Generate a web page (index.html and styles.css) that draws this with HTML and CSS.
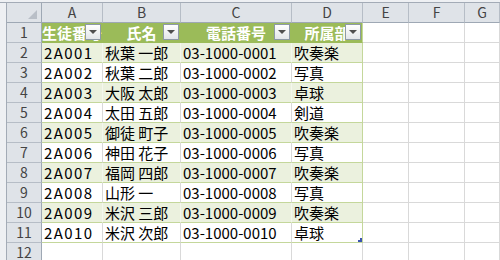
FILE: index.html
```html
<!DOCTYPE html>
<html lang="ja">
<head>
    <meta charset="UTF-8">
    <title>部員名簿</title>
    <link rel="stylesheet" href="styles.css">
</head>
<body>
    <div class="topbar"></div>
    <div class="main">
        <div class="frame"></div>
        <div class="sheet">
            <div class="row colheads">
                <div class="cell corner"></div>
                <div class="cell ch">A</div>
                <div class="cell ch">B</div>
                <div class="cell ch">C</div>
                <div class="cell ch">D</div>
                <div class="cell ch">E</div>
                <div class="cell ch">F</div>
                <div class="cell ch">G</div>
            </div>

            <div class="row">
                <div class="cell rh">1</div>
                <div class="cell th">生徒番号<span class="filter"></span></div>
                <div class="cell th">氏名<span class="filter"></span></div>
                <div class="cell th">電話番号<span class="filter"></span></div>
                <div class="cell th last">所属部<span class="filter"></span></div>
                <div class="cell"></div>
                <div class="cell"></div>
                <div class="cell"></div>
            </div>

            <div class="row band">
                <div class="cell rh">2</div>
                <div class="cell td id">2A001</div>
                <div class="cell td">秋葉 一郎</div>
                <div class="cell td">03-1000-0001</div>
                <div class="cell td last">吹奏楽</div>
                <div class="cell"></div>
                <div class="cell"></div>
                <div class="cell"></div>
            </div>
            <div class="row">
                <div class="cell rh">3</div>
                <div class="cell td id">2A002</div>
                <div class="cell td">秋葉 二郎</div>
                <div class="cell td">03-1000-0002</div>
                <div class="cell td last">写真</div>
                <div class="cell"></div>
                <div class="cell"></div>
                <div class="cell"></div>
            </div>
            <div class="row band">
                <div class="cell rh">4</div>
                <div class="cell td id">2A003</div>
                <div class="cell td">大阪 太郎</div>
                <div class="cell td">03-1000-0003</div>
                <div class="cell td last">卓球</div>
                <div class="cell"></div>
                <div class="cell"></div>
                <div class="cell"></div>
            </div>
            <div class="row">
                <div class="cell rh">5</div>
                <div class="cell td id">2A004</div>
                <div class="cell td">太田 五郎</div>
                <div class="cell td">03-1000-0004</div>
                <div class="cell td last">剣道</div>
                <div class="cell"></div>
                <div class="cell"></div>
                <div class="cell"></div>
            </div>
            <div class="row band">
                <div class="cell rh">6</div>
                <div class="cell td id">2A005</div>
                <div class="cell td">御徒 町子</div>
                <div class="cell td">03-1000-0005</div>
                <div class="cell td last">吹奏楽</div>
                <div class="cell"></div>
                <div class="cell"></div>
                <div class="cell"></div>
            </div>
            <div class="row">
                <div class="cell rh">7</div>
                <div class="cell td id">2A006</div>
                <div class="cell td">神田 花子</div>
                <div class="cell td">03-1000-0006</div>
                <div class="cell td last">写真</div>
                <div class="cell"></div>
                <div class="cell"></div>
                <div class="cell"></div>
            </div>
            <div class="row band">
                <div class="cell rh">8</div>
                <div class="cell td id">2A007</div>
                <div class="cell td">福岡 四郎</div>
                <div class="cell td">03-1000-0007</div>
                <div class="cell td last">吹奏楽</div>
                <div class="cell"></div>
                <div class="cell"></div>
                <div class="cell"></div>
            </div>
            <div class="row">
                <div class="cell rh">9</div>
                <div class="cell td id">2A008</div>
                <div class="cell td">山形 一</div>
                <div class="cell td">03-1000-0008</div>
                <div class="cell td last">写真</div>
                <div class="cell"></div>
                <div class="cell"></div>
                <div class="cell"></div>
            </div>
            <div class="row band">
                <div class="cell rh">10</div>
                <div class="cell td id">2A009</div>
                <div class="cell td">米沢 三郎</div>
                <div class="cell td">03-1000-0009</div>
                <div class="cell td last">吹奏楽</div>
                <div class="cell"></div>
                <div class="cell"></div>
                <div class="cell"></div>
            </div>
            <div class="row">
                <div class="cell rh">11</div>
                <div class="cell td id">2A010</div>
                <div class="cell td">米沢 次郎</div>
                <div class="cell td">03-1000-0010</div>
                <div class="cell td last end">卓球</div>
                <div class="cell"></div>
                <div class="cell"></div>
                <div class="cell"></div>
            </div>
            <div class="row">
                <div class="cell rh">12</div>
                <div class="cell"></div>
                <div class="cell"></div>
                <div class="cell"></div>
                <div class="cell"></div>
                <div class="cell"></div>
                <div class="cell"></div>
                <div class="cell"></div>
            </div>
        </div>
    </div>
</body>
</html>
```

FILE: styles.css
```css
body {
    margin: 0;
    background-color: #ffffff;
    font-family: "Noto Sans CJK JP", "Liberation Sans", sans-serif;
    overflow: hidden;
}
.topbar {
    height: 2px;
    background-color: #eef0f3;
    border-bottom: 1px solid #a3abb6;
}
.main {
    display: flex;
}
.frame {
    width: 6px;
    flex: none;
    background-color: #eef0f3;
    border-right: 1px solid #a3abb6;
}
.sheet {
    flex: 1;
}
.row {
    display: grid;
    grid-template-columns: 35px 61px 78px 111px 71px 46px 56px 1fr;
    height: 20px;
}
.cell {
    box-sizing: border-box;
    height: 20px;
    padding: 0 2px;
    border-right: 1px solid #d9d9d9;
    border-bottom: 1px solid #d9d9d9;
    font-size: 15px;
    line-height: 19px;
    white-space: nowrap;
    overflow: hidden;
    color: #000000;
}

/* row and column headings */
.ch, .corner {
    background-color: #dfe3e8;
    border-right-color: #b6bdc6;
    border-bottom-color: #9ea8b4;
    text-align: center;
    font-size: 14px;
    color: #444444;
}
.corner {
    position: relative;
    border-right-color: #9ea8b4;
}
.corner::after {
    content: "";
    position: absolute;
    right: 4px;
    bottom: 3px;
    width: 9px;
    height: 9px;
    background-color: #b9bfc7;
    clip-path: polygon(100% 0, 100% 100%, 0 100%);
}
.rh {
    background-color: #dfe3e8;
    border-right-color: #9ea8b4;
    border-bottom-color: #b6bdc6;
    text-align: center;
    font-size: 14px;
    color: #444444;
}

/* table */
.th {
    position: relative;
    overflow: visible;
    padding: 0;
    background-color: #9bbb59;
    border-right-color: #9bbb59;
    border-bottom-color: #9bbb59;
    color: #ffffff;
    font-weight: bold;
    text-align: center;
}
.filter {
    position: absolute;
    top: 1px;
    right: 1px;
    box-sizing: border-box;
    width: 16px;
    height: 16px;
    border: 1px solid #8d99a6;
    background: linear-gradient(#ffffff, #e3e6ea);
}
.filter::after {
    content: "";
    position: absolute;
    left: 3px;
    top: 5px;
    border-left: 4px solid transparent;
    border-right: 4px solid transparent;
    border-top: 4px solid #4f4f4f;
}
.td {
    border-bottom-color: #c4d79b;
}
.id {
    letter-spacing: 1.4px;
}
.band .td {
    background-color: #ebf1de;
    border-right-color: #f4f7ed;
}
.last {
    border-right-color: #c4d79b;
}
.band .last {
    border-right-color: #c4d79b;
}
.end {
    position: relative;
}
.end::after {
    content: "";
    position: absolute;
    right: 0;
    bottom: 0;
    width: 4px;
    height: 4px;
    background-color: #3b54b0;
    clip-path: polygon(100% 0, 100% 100%, 0 100%, 0 50%, 50% 50%, 50% 0);
}
```
